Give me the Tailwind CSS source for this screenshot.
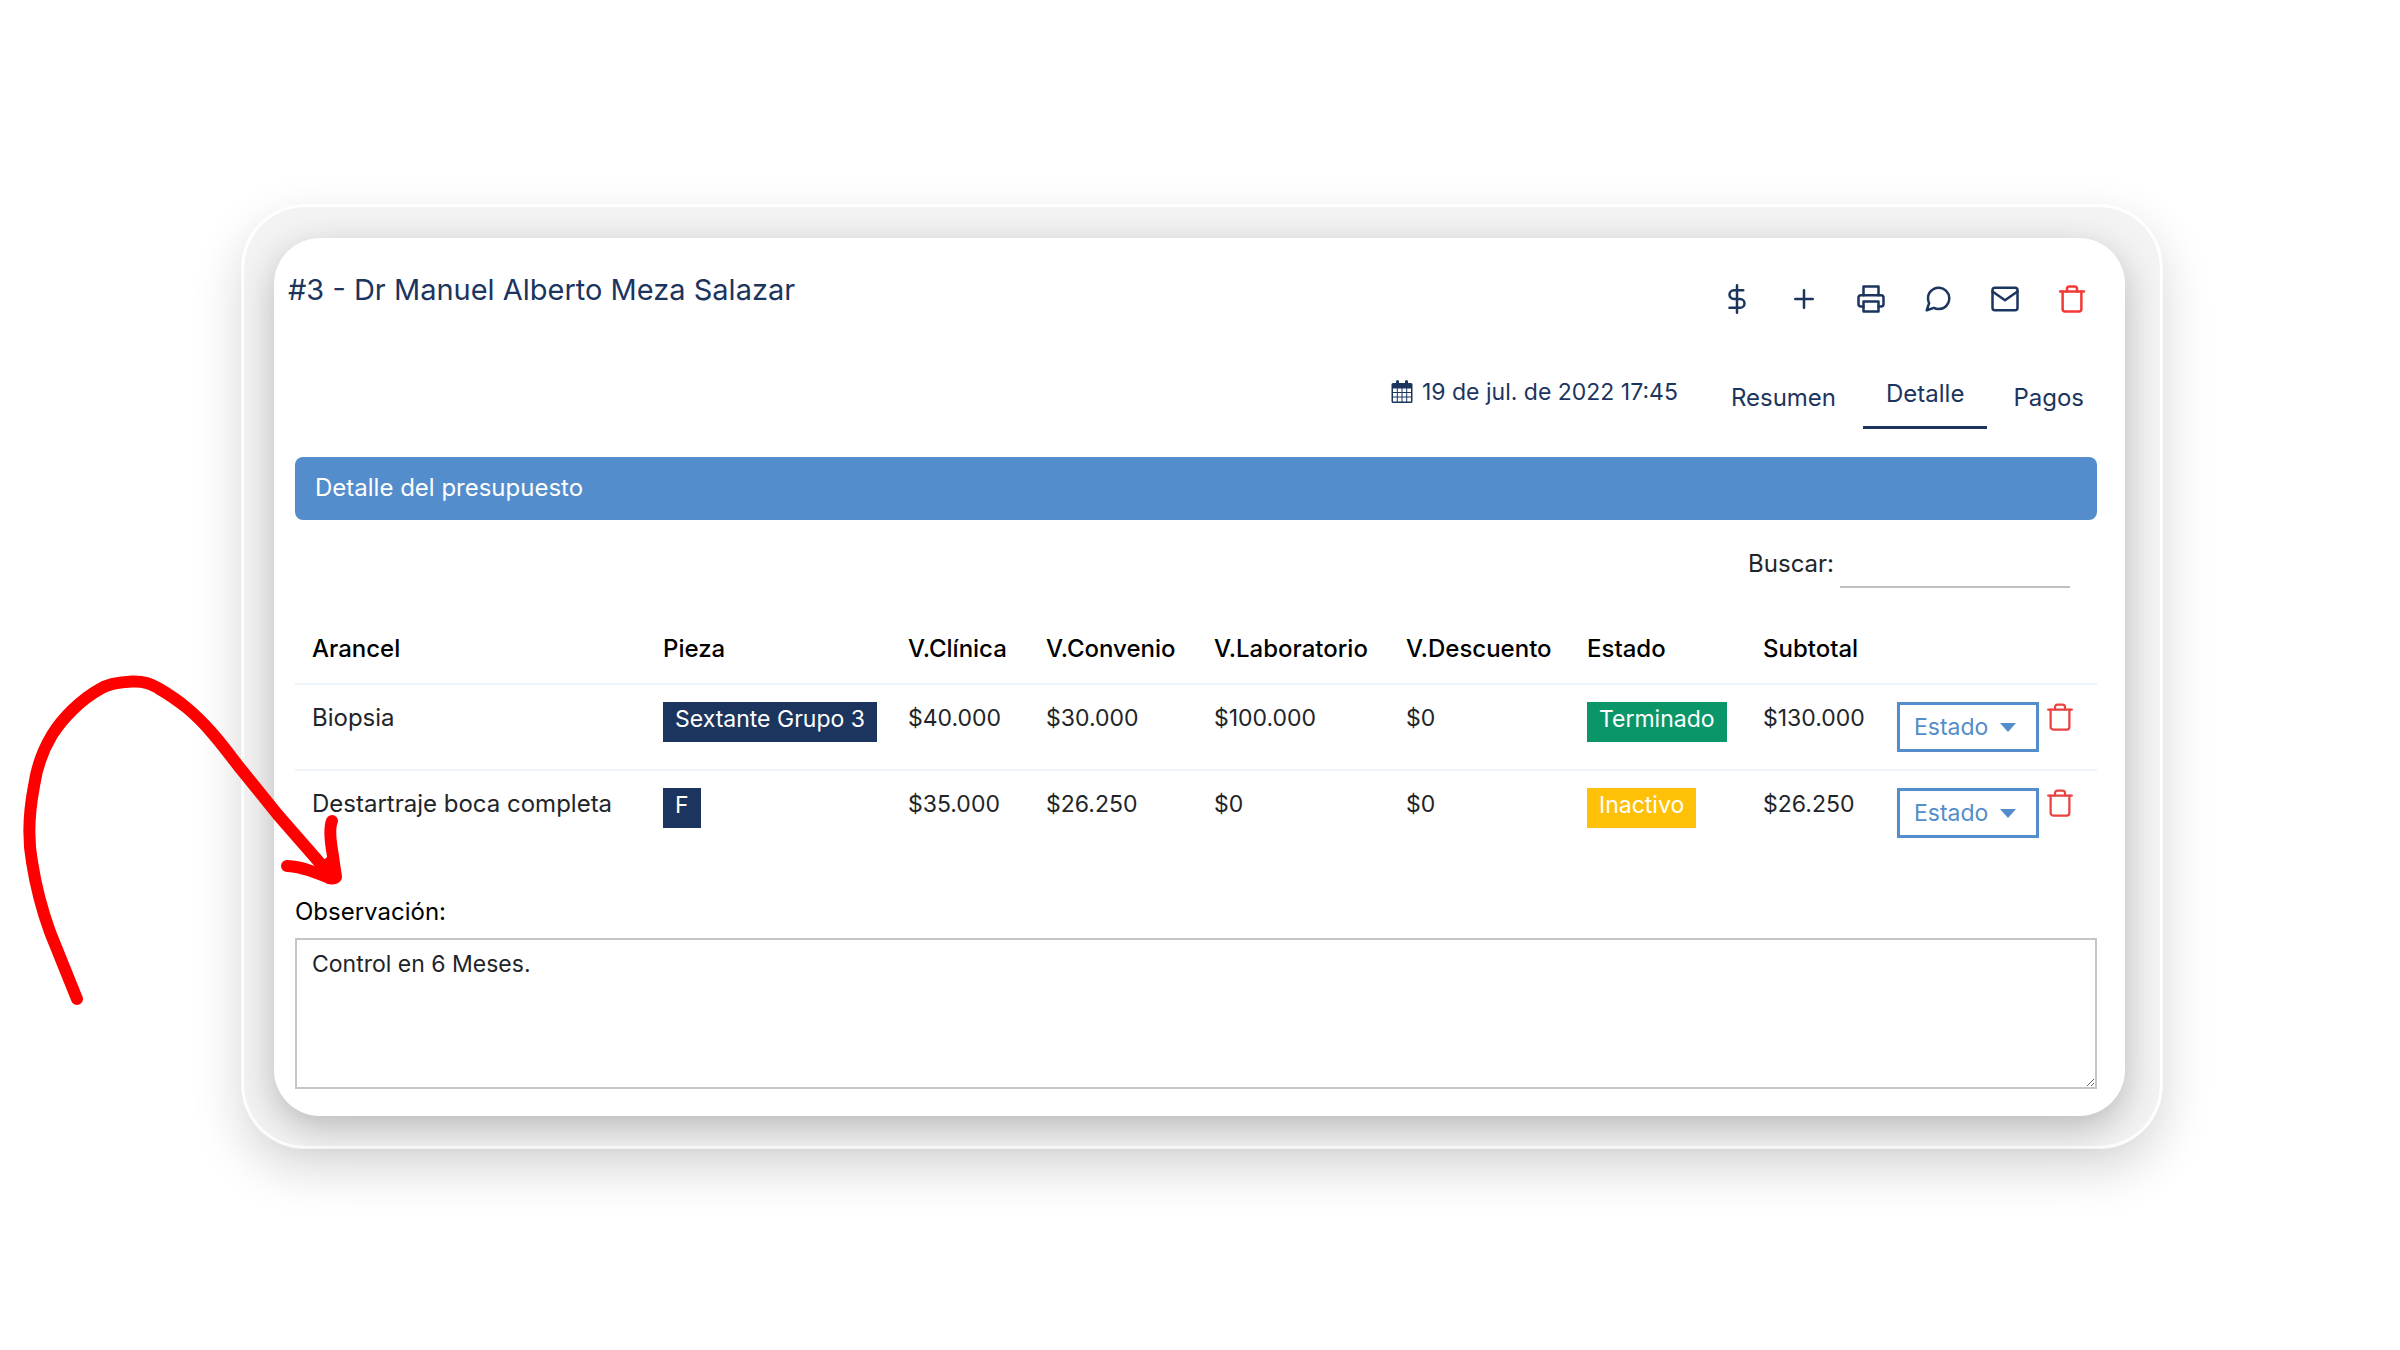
<!DOCTYPE html>
<html lang="es">
<head>
<meta charset="utf-8">
<title>Detalle del presupuesto</title>
<script src="https://cdn.jsdelivr.net/npm/@tailwindcss/browser@4"></script>
</head>
<body class="bg-white font-[Inter,sans-serif] text-[23px] leading-8 text-[#212529]">
<svg class="hidden">
  <symbol id="trash" viewBox="0 0 24 24" fill="none" stroke="currentColor" stroke-linecap="round" stroke-linejoin="round"><path d="M2.500 6h19"/><path d="M19.500 6v14a2 2 0 0 1-2 2h-11a2 2 0 0 1-2-2V6m3.500 0V4a2 2 0 0 1 2-2h4a2 2 0 0 1 2 2v2"/></symbol>
</svg>
<div class="relative">
<div class="pt-[204px] pb-[201px] pl-[241px] pr-[237px]">
<div class="rounded-[64px] border-[3px] border-white/80 bg-[#f3f3f3] bg-clip-padding pt-[31px] pr-[35px] pb-[30px] pl-[30px] shadow-[0_20px_50px_rgba(0,0,0,0.16)]">
<main class="flex flex-col rounded-[46px] bg-white pt-9 pr-7 pb-[27px] pl-[21px] shadow-[0_12px_36px_rgba(0,0,0,0.24)]">
  <header class="flex items-start justify-between">
    <h1 class="-ml-[7px] text-[29px] leading-8 text-[#1c355e]">#3 - Dr Manuel Alberto Meza Salazar</h1>
    <div class="flex gap-[37px] pt-2.5 pr-[10px] text-[#1c355e]">
      <button aria-label="Cobrar"><svg class="size-[30px]" viewBox="0 0 24 24" fill="none" stroke="currentColor" stroke-width="2" stroke-linecap="round" stroke-linejoin="round"><path d="M12 1v22M17 5H9.500a3.500 3.500 0 0 0 0 7h5a3.500 3.500 0 0 1 0 7H6"/></svg></button>
      <button aria-label="Agregar"><svg class="size-[30px]" viewBox="0 0 24 24" fill="none" stroke="currentColor" stroke-width="2" stroke-linecap="round"><path d="M12 5v14M5 12h14"/></svg></button>
      <button aria-label="Imprimir"><svg class="size-[30px]" viewBox="0 0 24 24" fill="none" stroke="currentColor" stroke-width="2" stroke-linecap="round" stroke-linejoin="round"><path d="M6 9V2h12v7"/><path d="M6 18H4a2 2 0 0 1-2-2v-5a2 2 0 0 1 2-2h16a2 2 0 0 1 2 2v5a2 2 0 0 1-2 2h-2"/><path d="M6 14h12v8H6z"/></svg></button>
      <button aria-label="Mensaje"><svg class="size-[30px]" viewBox="0 0 24 24" fill="none" stroke="currentColor" stroke-width="2" stroke-linecap="round" stroke-linejoin="round"><path d="M21 11.500a8.380 8.380 0 0 1-.9 3.800 8.500 8.500 0 0 1-7.600 4.700 8.380 8.380 0 0 1-3.800-.9L3 21l1.900-5.700a8.380 8.380 0 0 1-.9-3.800 8.500 8.500 0 0 1 4.700-7.600 8.380 8.380 0 0 1 3.800-.9h.5a8.480 8.480 0 0 1 8 8v.5z"/></svg></button>
      <button aria-label="Correo"><svg class="size-[30px]" viewBox="0 0 24 24" fill="none" stroke="currentColor" stroke-width="2" stroke-linecap="round" stroke-linejoin="round"><rect x="2" y="3" width="20" height="18" rx="2"/><path d="m22 6-10 7L2 6"/></svg></button>
      <button aria-label="Eliminar presupuesto" class="text-[#f13a34]"><svg class="size-[30px]" stroke-width="2"><use href="#trash"/></svg></button>
    </div>
  </header>
  <div class="mt-14 flex items-start justify-end text-[#1c355e]">
    <p class="mr-[26px] flex items-center gap-2 pt-1.5"><svg class="size-6" viewBox="0 0 24 24" fill="currentColor"><path fill-rule="evenodd" d="M3 3h3V1.500a1.500 1.500 0 0 1 3 0V3h6V1.500a1.500 1.500 0 0 1 3 0V3h3a1.500 1.500 0 0 1 1.500 1.500v17A1.500 1.500 0 0 1 21 23H3a1.500 1.500 0 0 1-1.500-1.500v-17A1.500 1.500 0 0 1 3 3zm0 5.500v3.500h3.800V8.500zm4.800 0V12h3.700V8.500zm4.700 0V12h3.700V8.500zm4.700 0V12H21V8.500zM3 13v3.500h3.800V13zm4.800 0v3.500h3.700V13zm4.700 0v3.500h3.700V13zm4.700 0v3.500H21V13zM3 17.500v4h3.800v-4zm4.800 0v4h3.700v-4zm4.700 0v4h3.700v-4zm4.700 0v4H21v-4z"/></svg>19 de jul. de 2022 17:45</p>
    <nav class="flex text-[24px]">
      <a href="#resumen" class="px-[27px] pt-3">Resumen</a>
      <a href="#detalle" class="border-b-3 border-[#1c355e] px-[23px] pt-2 pb-4">Detalle</a>
      <a href="#pagos" class="pt-3 pr-[13px] pl-[26px]">Pagos</a>
    </nav>
  </div>
  <h2 class="mt-7 rounded-lg bg-[#538dcb] px-5 pt-[15px] pb-4 text-[24px] text-white">Detalle del presupuesto</h2>
  <div class="mt-[22px] mr-[27px] flex items-start justify-end gap-1.5">
    <label for="buscar" class="pt-1.5 text-[24px]">Buscar:</label>
    <input id="buscar" type="search" class="h-[46px] w-[230px] border-b-2 border-[#c0c0c0] outline-none">
  </div>
  <table class="mt-[26px] w-full table-fixed text-left">
    <colgroup><col class="w-[351px]"><col class="w-[245px]"><col class="w-[138px]"><col class="w-[168px]"><col class="w-[192px]"><col class="w-[181px]"><col class="w-[176px]"><col class="w-[134px]"><col></colgroup>
    <thead>
      <tr class="h-[70px] border-b-2 border-[#eff4fb] text-[24px] text-black *:pl-[17px] *:font-medium">
        <th>Arancel</th><th>Pieza</th><th>V.Clínica</th><th>V.Convenio</th><th>V.Laboratorio</th><th>V.Descuento</th><th>Estado</th><th>Subtotal</th><th></th>
      </tr>
    </thead>
    <tbody class="*:h-[86px] *:align-top *:*:pt-[17px] *:*:pl-[17px]">
      <tr class="border-b-2 border-[#eff4fb]">
        <td class="text-[24px]">Biopsia</td><td><span class="inline-block h-10 bg-[#1c355e] px-3 pt-px text-white">Sextante Grupo 3</span></td><td>$40.000</td><td>$30.000</td><td>$100.000</td><td>$0</td><td><span class="inline-block h-10 bg-[#0a9669] px-3 pt-px text-white">Terminado</span></td><td>$130.000</td>
        <td><div class="flex items-start gap-1.5"><button class="flex h-[50px] w-[142px] items-center gap-3 border-3 border-[#538dcb] pl-[14px] text-[#538dcb]">Estado<svg class="h-[9px] w-4" viewBox="0 0 16 9" fill="currentColor"><path d="M0 0h16L8 9z"/></svg></button><button aria-label="Eliminar Biopsia" class="text-[#e8433f]"><svg class="size-[30px]" stroke-width="1.800"><use href="#trash"/></svg></button></div></td>
      </tr>
      <tr>
        <td class="text-[24px]">Destartraje boca completa</td><td><span class="inline-block h-10 bg-[#1c355e] px-3 pt-px text-white">F</span></td><td>$35.000</td><td>$26.250</td><td>$0</td><td>$0</td><td><span class="inline-block h-10 bg-[#ffc107] px-3 pt-px text-white">Inactivo</span></td><td>$26.250</td>
        <td><div class="flex items-start gap-1.5"><button class="flex h-[50px] w-[142px] items-center gap-3 border-3 border-[#538dcb] pl-[14px] text-[#538dcb]">Estado<svg class="h-[9px] w-4" viewBox="0 0 16 9" fill="currentColor"><path d="M0 0h16L8 9z"/></svg></button><button aria-label="Eliminar Destartraje" class="text-[#e8433f]"><svg class="size-[30px]" stroke-width="1.800"><use href="#trash"/></svg></button></div></td>
      </tr>
    </tbody>
  </table>
  <label for="obs" class="mt-10 text-[24px] text-black">Observación:</label>
  <textarea id="obs" class="mt-2.5 h-[151px] resize-y border-2 border-[#c6c6c6] px-[15px] py-2">Control en 6 Meses.</textarea>
</main>
</div>
</div>
<svg class="pointer-events-none absolute top-[660px] left-0 h-[360px] w-[360px]" viewBox="0 660 360 360" fill="none" stroke="#f00" stroke-width="12" stroke-linecap="round" stroke-linejoin="round"><path d="M77 999L50 932C42 910 35 881 32 862C28 840 29 812 34 786C37 765 43 750 52 735C62 719 80 700 100 689C108 684 120 682 132 681.500C146 681 152 685 158 688C180 701 195 713 213 734C225 748 232 758 240 768L278 815L333 878"/><path d="M332 821C329 828 331 845 333 856C334 864 335 870 336 877C334 879 330 879 327 877C310 870 296 866 287 866"/><path d="M315 869L333 855L333 877Z" fill="#f00" stroke-width="4"/></svg>
</div>
</body>
</html>
